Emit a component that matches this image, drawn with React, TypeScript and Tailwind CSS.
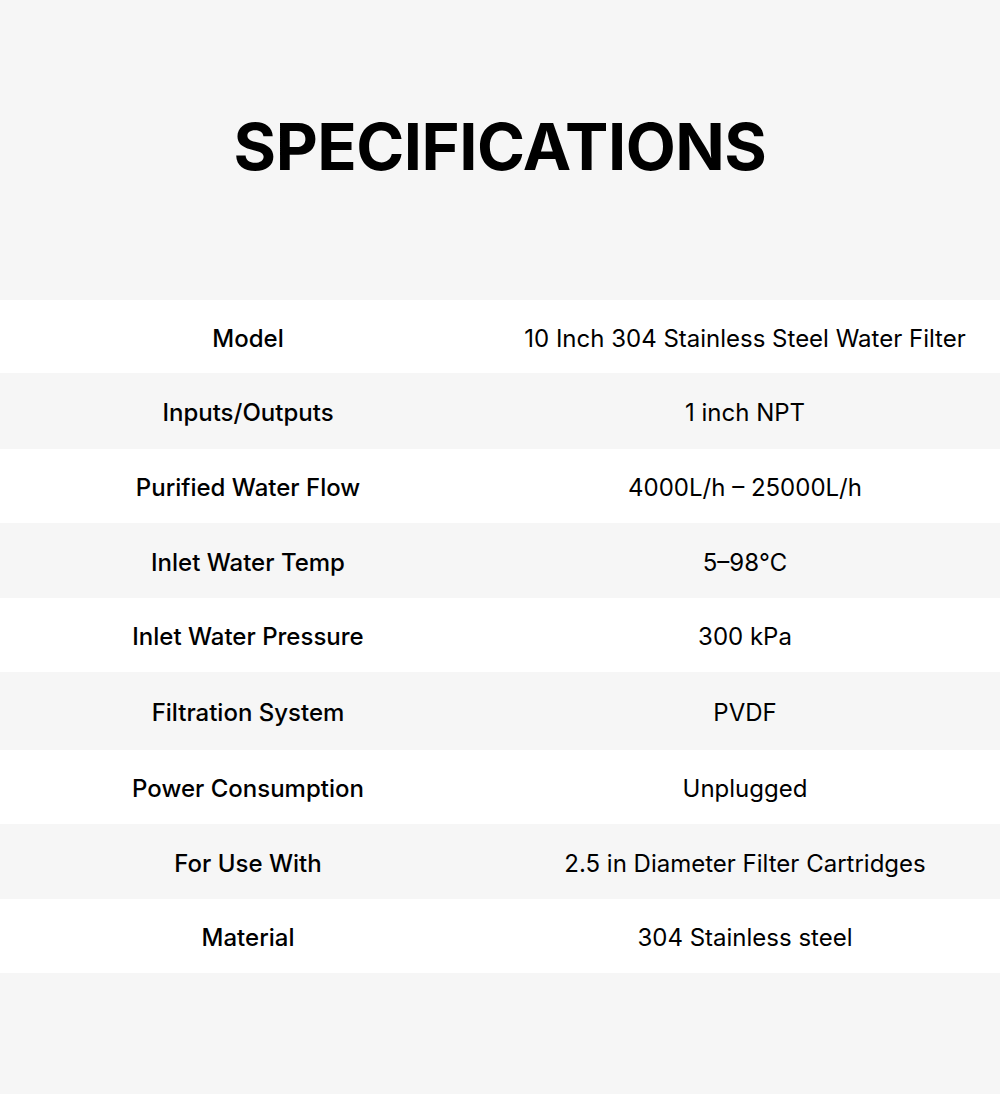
import React from "react";

const rows: { label: string; value: string; h: string; bg: string }[] = [
  { label: "Model", value: "10 Inch 304 Stainless Steel Water Filter", h: "h-[73px]", bg: "bg-white" },
  { label: "Inputs/Outputs", value: "1 inch NPT", h: "h-[76px]", bg: "bg-[#f6f6f6]" },
  { label: "Purified Water Flow", value: "4000L/h – 25000L/h", h: "h-[74px]", bg: "bg-white" },
  { label: "Inlet Water Temp", value: "5–98℃", h: "h-[75px]", bg: "bg-[#f6f6f6]" },
  { label: "Inlet Water Pressure", value: "300 kPa", h: "h-[74px]", bg: "bg-white" },
  { label: "Filtration System", value: "PVDF", h: "h-[78px]", bg: "bg-[#f6f6f6]" },
  { label: "Power Consumption", value: "Unplugged", h: "h-[74px]", bg: "bg-white" },
  { label: "For Use With", value: "2.5 in Diameter Filter Cartridges", h: "h-[75px]", bg: "bg-[#f6f6f6]" },
  { label: "Material", value: "304 Stainless steel", h: "h-[74px]", bg: "bg-white" },
];

export default function App() {
  return (
    <div
      className="w-[1000px] h-[1094px] bg-[#f6f6f6] text-black flex flex-col"
      style={{ fontFamily: "Inter, 'Noto Sans', sans-serif" }}
    >
      <div className="h-[300px] flex items-center justify-center pb-[8px]">
        <h1 className="text-[65px] font-bold leading-none tracking-[-0.5px]">SPECIFICATIONS</h1>
      </div>
      <div className="flex flex-col">
        {rows.map((r) => (
          <div key={r.label} className={`flex items-center pt-[4px] ${r.h} ${r.bg}`}>
            <div className="w-[496px] text-center text-[24px] font-medium">{r.label}</div>
            <div className="flex-1 pr-[6px] text-center text-[24px]">{r.value}</div>
          </div>
        ))}
      </div>
    </div>
  );
}
